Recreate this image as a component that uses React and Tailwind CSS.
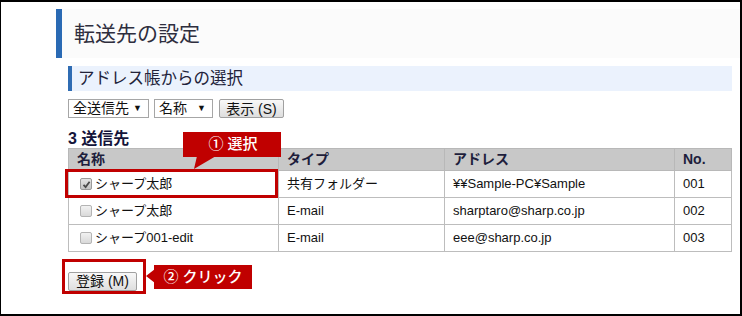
import React from "react";

const font = { fontFamily: '"Liberation Sans", "Noto Sans CJK JP", sans-serif' };

const rows = [
  { name: "シャープ太郎", type: "共有フォルダー", addr: "¥¥Sample-PC¥Sample", no: "001", checked: true },
  { name: "シャープ太郎", type: "E-mail", addr: "sharptaro@sharp.co.jp", no: "002", checked: false },
  { name: "シャープ001-edit", type: "E-mail", addr: "eee@sharp.co.jp", no: "003", checked: false },
];

const Check = ({ checked }) => (
  <span
    className={
      "inline-flex w-[12px] h-[12px] rounded-[2px] border items-center justify-center " +
      (checked
        ? "bg-gradient-to-b from-[#e4e4e4] to-[#c4c4c4] border-[#9a9a9a]"
        : "bg-gradient-to-b from-[#f2f2f2] to-[#d9d9d9] border-[#b4b4b4]")
    }
  >
    {checked && (
      <svg width="9" height="9" viewBox="0 0 9 9">
        <path d="M1.5 4.8 L3.6 7 L7.6 1.8" stroke="#4a4a4a" strokeWidth="1.8" fill="none" />
      </svg>
    )}
  </span>
);

const Select = ({ label, width }) => (
  <div
    className={"h-[19px] border border-[#a6a6a6] bg-white flex items-center justify-between pl-[4px] pr-[6px] text-[14px] text-[#111] " + width}
  >
    <span>{label}</span>
    <span className="text-[9px]">▼</span>
  </div>
);

export default function App() {
  return (
    <div
      className="relative w-[742px] h-[316px] bg-white border-t-2 border-r-2 border-b-2 border-l border-black overflow-hidden"
      style={font}
    >
      <div className="pl-[55px] pt-[7px]">
        {/* Title */}
        <div className="h-[49px] bg-[#fbfbfb] border-l-[6px] border-[#2a6ab4] flex items-center pl-[12px] text-[21px] text-[#2e2e3e]">
          転送先の設定
        </div>

        <div className="pl-[12px] pr-[8px]">
          {/* Sub title */}
          <div className="mt-[8px] h-[25px] bg-[#ebf2fd] border-l-4 border-[#2f6cb3] flex items-center pl-[6px] text-[16.5px] text-[#22223a]">
            アドレス帳からの選択
          </div>

          {/* Filters */}
          <div className="mt-[8px] flex items-center gap-[5px]">
            <Select label="全送信先" width="w-[81px]" />
            <Select label="名称" width="w-[59px]" />
            <button className="h-[19px] w-[65px] ml-[1px] border border-[#a0a0a0] rounded-[2px] bg-gradient-to-b from-[#f8f8f8] to-[#dedede] text-[14px] text-[#111] leading-none">
              表示 (S)
            </button>
          </div>

          {/* Count */}
          <div className="mt-[12px] text-[16px] font-semibold leading-[18px] text-[#14143a]">3 送信先</div>

          {/* Table */}
          <table className="border-collapse w-[663px] text-[13px] text-[#111] table-fixed">
            <colgroup>
              <col className="w-[210px]" />
              <col className="w-[166px]" />
              <col className="w-[230px]" />
              <col className="w-[57px]" />
            </colgroup>
            <thead>
              <tr className="h-[22px] bg-[#c8c8c8] text-[14px] text-[#1e1e3c]">
                <th className="border border-[#b8b8b8] text-left pl-[8px] font-bold">名称</th>
                <th className="border border-[#b8b8b8] text-left pl-[8px] font-bold">タイプ</th>
                <th className="border border-[#b8b8b8] text-left pl-[8px] font-bold">アドレス</th>
                <th className="border border-[#b8b8b8] text-left pl-[8px] font-bold">No.</th>
              </tr>
            </thead>
            <tbody>
              {rows.map((r, i) => (
                <tr key={i} className="h-[27px]">
                  <td className="border border-[#bdbdbd] pl-[11px]">
                    <div className="flex items-center gap-[3px]">
                      <Check checked={r.checked} />
                      <span>{r.name}</span>
                    </div>
                  </td>
                  <td className="border border-[#bdbdbd] pl-[8px]">{r.type}</td>
                  <td className="border border-[#bdbdbd] pl-[8px]">{r.addr}</td>
                  <td className="border border-[#bdbdbd] pl-[8px]">{r.no}</td>
                </tr>
              ))}
            </tbody>
          </table>

          {/* Register button */}
          <div className="mt-[17px]">
            <button className="h-[19px] w-[69px] border border-[#a0a0a0] rounded-[2px] bg-gradient-to-b from-[#f8f8f8] to-[#dedede] text-[14px] text-[#111] leading-none">
              登録 (M)
            </button>
          </div>
        </div>
      </div>

      {/* Annotations */}
      <div className="absolute left-[64px] top-[167px] w-[213px] h-[29px] border-[3px] border-[#c00000]" />
      <div className="absolute left-[182px] top-[130px] w-[98px] h-[25px] bg-[#c00000] text-white text-[15px] font-medium flex items-center justify-center pl-[2px]">
        ① 選択
      </div>
      <svg className="absolute left-[190px] top-[154px]" width="28" height="14" viewBox="0 0 28 14">
        <polygon points="6,0 25,0 3,13" fill="#c00000" />
      </svg>

      <div className="absolute left-[61px] top-[257px] w-[84px] h-[35px] border-[3px] border-[#c00000]" />
      <div className="absolute left-[153px] top-[263px] w-[98px] h-[24px] bg-[#c00000] text-white text-[15px] font-medium flex items-center justify-center">
        ② クリック
      </div>
      <svg className="absolute left-[144px] top-[266px]" width="10" height="16" viewBox="0 0 10 16">
        <polygon points="10,1 10,15 1,8" fill="#c00000" />
      </svg>
    </div>
  );
}
